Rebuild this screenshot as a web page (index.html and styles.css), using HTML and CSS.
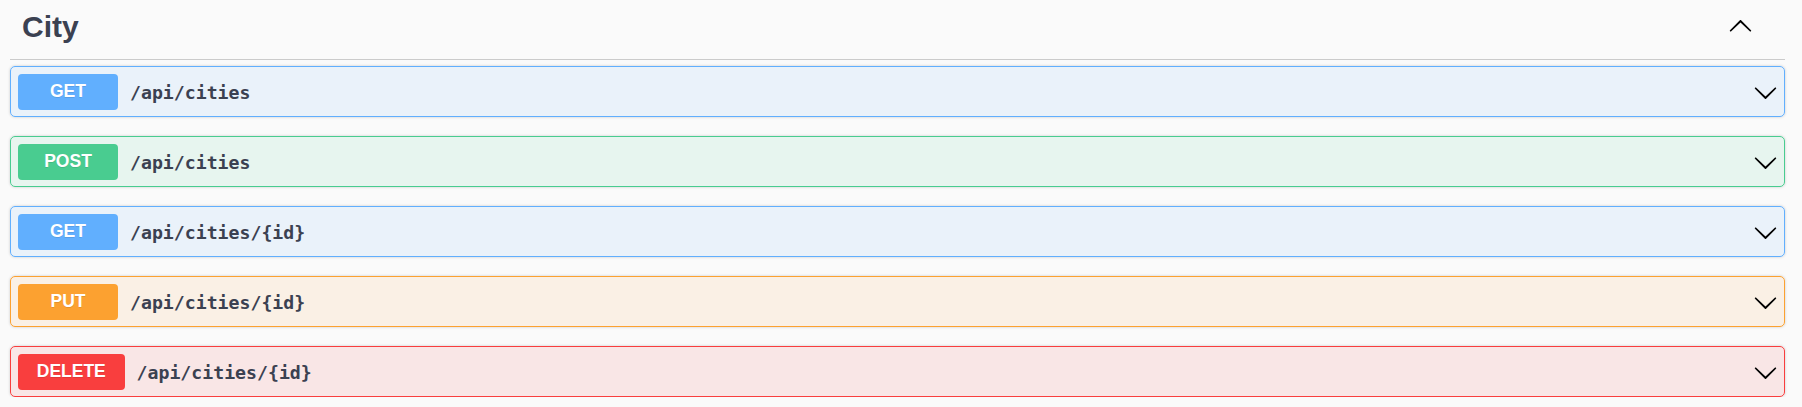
FILE: index.html
```html
<!DOCTYPE html>
<html lang="en">
<head>
<meta charset="utf-8">
<title>City</title>
<link rel="stylesheet" href="styles.css">
</head>
<body>
<section class="tag-section">
  <div class="tag-header">
    <h3 class="tag-title">City</h3>
    <button class="toggle" aria-label="Collapse">
      <svg class="chev up" viewBox="0 0 20 20" width="25" height="25"><path d="M17.418 6.109c.272-.268.709-.268.979 0s.271.701 0 .969l-7.908 7.83c-.27.268-.707.268-.979 0l-7.908-7.83c-.27-.268-.27-.701 0-.969.271-.268.709-.268.979 0L10 13.25l7.418-7.141z"/></svg>
    </button>
  </div>
  <div class="ops">
    <div class="op op-get">
      <span class="method">GET</span>
      <span class="path">/api/cities</span>
      <svg class="chev" viewBox="0 0 20 20" width="25" height="25"><path d="M17.418 6.109c.272-.268.709-.268.979 0s.271.701 0 .969l-7.908 7.83c-.27.268-.707.268-.979 0l-7.908-7.83c-.27-.268-.27-.701 0-.969.271-.268.709-.268.979 0L10 13.25l7.418-7.141z"/></svg>
    </div>
    <div class="op op-post">
      <span class="method">POST</span>
      <span class="path">/api/cities</span>
      <svg class="chev" viewBox="0 0 20 20" width="25" height="25"><path d="M17.418 6.109c.272-.268.709-.268.979 0s.271.701 0 .969l-7.908 7.83c-.27.268-.707.268-.979 0l-7.908-7.83c-.27-.268-.27-.701 0-.969.271-.268.709-.268.979 0L10 13.25l7.418-7.141z"/></svg>
    </div>
    <div class="op op-get">
      <span class="method">GET</span>
      <span class="path">/api/cities/{id}</span>
      <svg class="chev" viewBox="0 0 20 20" width="25" height="25"><path d="M17.418 6.109c.272-.268.709-.268.979 0s.271.701 0 .969l-7.908 7.83c-.27.268-.707.268-.979 0l-7.908-7.83c-.27-.268-.27-.701 0-.969.271-.268.709-.268.979 0L10 13.25l7.418-7.141z"/></svg>
    </div>
    <div class="op op-put">
      <span class="method">PUT</span>
      <span class="path">/api/cities/{id}</span>
      <svg class="chev" viewBox="0 0 20 20" width="25" height="25"><path d="M17.418 6.109c.272-.268.709-.268.979 0s.271.701 0 .969l-7.908 7.83c-.27.268-.707.268-.979 0l-7.908-7.83c-.27-.268-.27-.701 0-.969.271-.268.709-.268.979 0L10 13.25l7.418-7.141z"/></svg>
    </div>
    <div class="op op-delete">
      <span class="method">DELETE</span>
      <span class="path">/api/cities/{id}</span>
      <svg class="chev" viewBox="0 0 20 20" width="25" height="25"><path d="M17.418 6.109c.272-.268.709-.268.979 0s.271.701 0 .969l-7.908 7.83c-.27.268-.707.268-.979 0l-7.908-7.83c-.27-.268-.27-.701 0-.969.271-.268.709-.268.979 0L10 13.25l7.418-7.141z"/></svg>
    </div>
  </div>
</section>
</body>
</html>
```
FILE: styles.css
```css
html, body {
  margin: 0;
  padding: 0;
  background: #fafafa;
}

body {
  font-family: "Liberation Sans", Arial, sans-serif;
  color: #3b4151;
}

.tag-section {
  padding: 0 17px 0 10px;
}

.tag-header {
  display: flex;
  justify-content: space-between;
  align-items: flex-start;
  padding: 10px 32px 15px 12px;
  border-bottom: 1px solid #cbcbcb;
  margin-bottom: 6px;
}

.tag-title {
  margin: 0;
  font-size: 30px;
  line-height: 34px;
  font-weight: 700;
  color: #3b4151;
}

.toggle {
  border: 0;
  background: none;
  padding: 0;
  margin-top: 4px;
  cursor: pointer;
}

.chev {
  display: block;
  fill: #000;
  flex: none;
}

.chev.up {
  transform: rotate(180deg);
}

.ops {
  display: flex;
  flex-direction: column;
  gap: 19px;
}

.op {
  display: flex;
  align-items: center;
  padding: 7px 6px 6px 7px;
  border: 1px solid;
  border-radius: 5px;
  box-shadow: 0 0 3px rgba(0, 0, 0, 0.19);
}

.method {
  box-sizing: border-box;
  min-width: 100px;
  height: 36px;
  padding: 7px 18.75px 9px;
  border-radius: 4px;
  font-size: 17.5px;
  line-height: 20px;
  font-weight: 700;
  color: #fff;
  text-align: center;
  text-shadow: 0 1px 0 rgba(0, 0, 0, 0.1);
}

.path {
  flex: 1;
  padding: 0 12px;
  font-family: "DejaVu Sans Mono", "Liberation Mono", monospace;
  font-size: 18.2px;
  font-weight: 700;
  color: #3b4151;
}

.op-get { border-color: #61affe; background: rgba(97, 175, 254, 0.1); }
.op-get .method { background: #61affe; }

.op-post { border-color: #49cc90; background: rgba(73, 204, 144, 0.1); }
.op-post .method { background: #49cc90; }

.op-put { border-color: #fca130; background: rgba(252, 161, 48, 0.1); }
.op-put .method { background: #fca130; }

.op-delete { border-color: #f93e3e; background: rgba(249, 62, 62, 0.1); }
.op-delete .method { background: #f93e3e; }
```
